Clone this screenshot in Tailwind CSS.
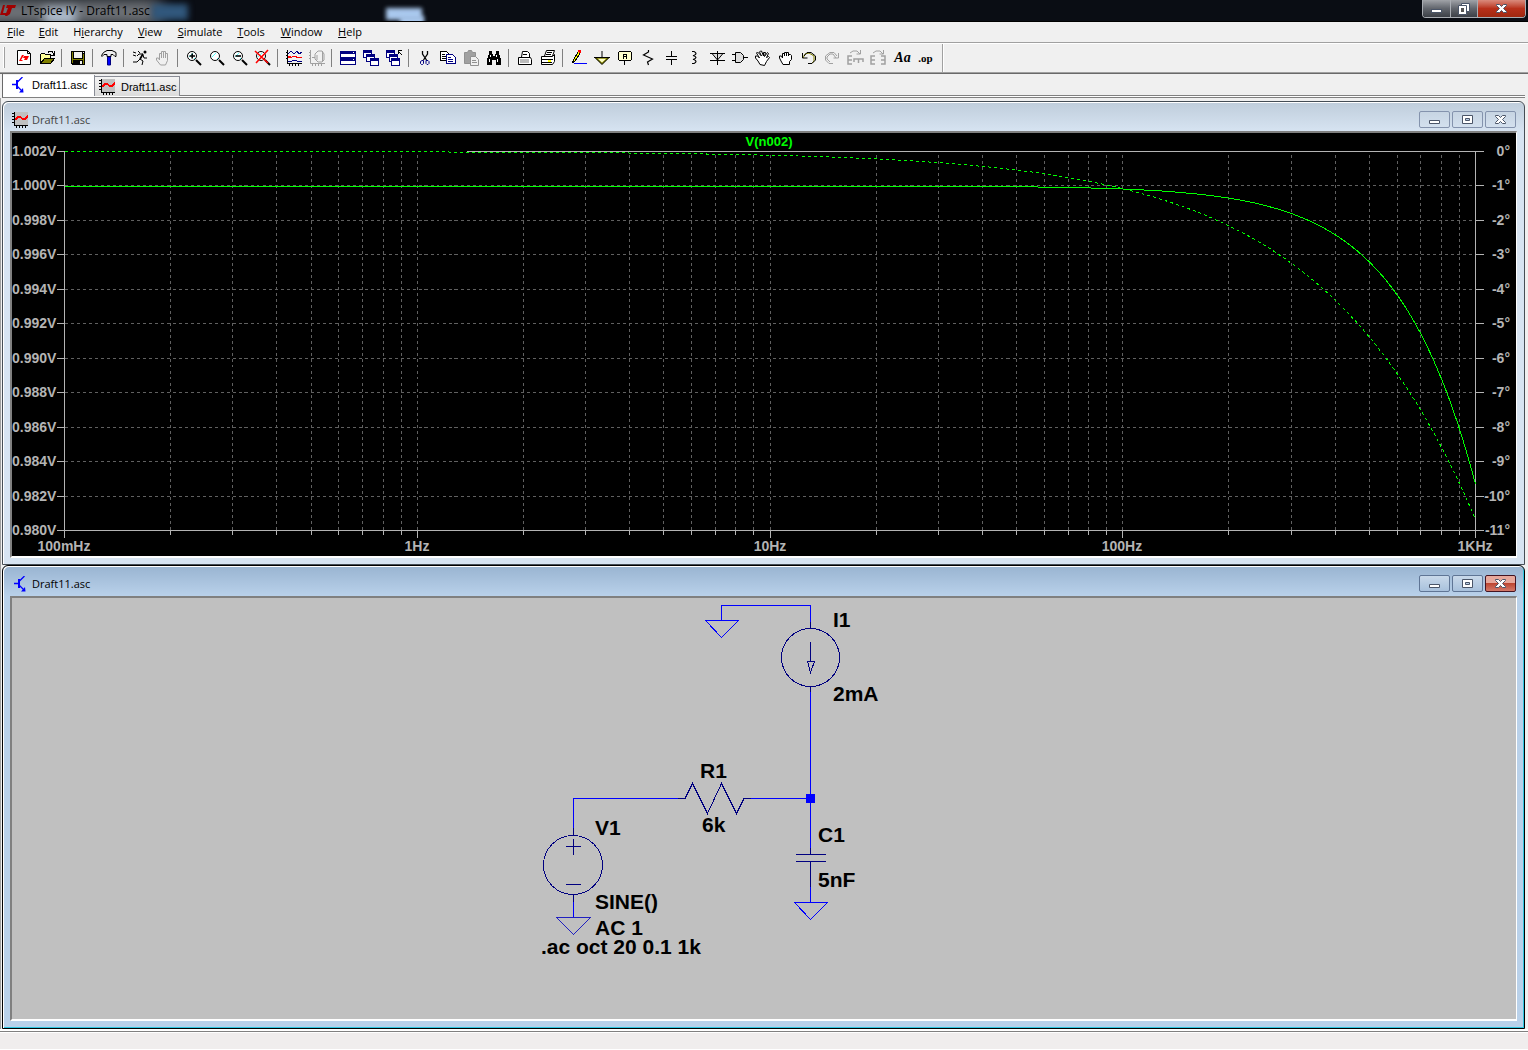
<!DOCTYPE html>
<html lang="en">
<head>
<meta charset="utf-8">
<title>LTspice IV - Draft11.asc</title>
<script src="https://cdn.jsdelivr.net/npm/@tailwindcss/browser@4"></script>
</head>
<body class="h-screen flex flex-col overflow-hidden bg-[#f0f0f0] text-black font-['Noto_Sans',sans-serif] text-xs">

<!-- shared icons -->
<svg class="hidden">
  <symbol id="i-wave" viewBox="0 0 16 16"><path fill="#c0c0c0" d="M2 0h14v14H2z"/><path stroke="#000" stroke-width="1" d="M2.500 0v13.500H16M0 1.500h2M0 4.500h2M0 7.500h2M0 10.500h2M4.500 14v2M7.500 14v2M10.500 14v2M13.500 14v2" fill="none"/><path stroke="#f00" stroke-width="1.800" fill="none" d="M3 8l3-3h2l3 2h2l3-3"/></symbol>
  <symbol id="i-bjt" viewBox="0 0 16 16"><path stroke="#00f" fill="none" stroke-width="1.300" d="M0 7.500h5M10.500 0L5 5.500M5 9l5 5"/><path fill="#00f" d="M4 3h2v9H4zM11.500 15.500H7l4-4.500z"/></symbol>
  <symbol id="i-min" viewBox="0 0 12 10"><path fill="#fff" stroke="#4a5568" d="M.5 5.500h10v3H.5z"/></symbol>
  <symbol id="i-max" viewBox="0 0 12 10"><path fill="#fff" stroke="#4a5568" d="M.5.500h10v8H.5z"/><path fill="#b9cde5" stroke="#4a5568" d="M3.500 3.500h4v2h-4z"/></symbol>
  <symbol id="i-close" viewBox="0 0 12 10"><path fill="#fff" stroke="#4a5568" d="M.5.500h3l2 2 2-2h3v1l-3 3 3 3v1h-3l-2-2-2 2h-3v-1l3-3-3-3z"/></symbol>
  <symbol id="i-lens" viewBox="0 0 16 16"><circle cx="6" cy="6" r="4.500" fill="#fff" stroke="#000"/><path stroke="#5ff" d="M3 7l4-4M8 9l1-1" stroke-width="1"/><path stroke="#000" stroke-width="2" d="M10 10l5 5"/></symbol>
  <symbol id="i-win" viewBox="0 0 9 8"><path fill="#fff" stroke="#000080" d="M.5.500h8v7h-8z"/><path fill="#000080" d="M0 0h9v3H0z"/></symbol>
</svg>

<header class="h-[22px] shrink-0 relative overflow-hidden flex items-center bg-[#0a0d14] border-b border-black">
  <div class="absolute -left-8 top-0 w-48 h-6 bg-[#777b80] blur-[8px]"></div>
  <div class="absolute left-11 top-2 w-8 h-4 bg-[#aebccc] blur-[5px]"></div>
  <div class="absolute left-[152px] top-1 w-9 h-4 bg-[#31577c] blur-[3px]"></div>
  <div class="absolute left-[386px] top-2 w-9 h-3 bg-[#a9c8ed] blur-[2px]"></div>
  <div class="absolute left-[400px] top-4 w-6 h-3 bg-[#a9c8ed] blur-[2px]"></div>
  <svg class="relative w-4 h-3 shrink-0" viewBox="0 0 16 12"><path fill="#a00000" d="M3 0h2L3 8h4l-1 2H0zM7 0h9l-1 3h-3l-2 6-3 2H5l3-8H6z"/></svg>
  <h1 class="relative ml-[5px] text-xs leading-5 whitespace-nowrap font-['Open_Sans',sans-serif]">LTspice IV - Draft11.asc</h1>
  <div class="relative ml-auto mr-[2px] self-start h-[18px] flex rounded-b border border-t-0 border-[#a9adb3] overflow-hidden">
    <button aria-label="Minimize" class="w-7 flex justify-center items-center bg-linear-to-b from-[#a0a3a8] via-[#62666d] to-[#3c4047] border-r border-[#a9adb3]"><svg class="w-3 h-[10px]" shape-rendering="crispEdges"><use href="#i-min"/></svg></button>
    <button aria-label="Restore" class="w-[27px] flex justify-center items-center bg-linear-to-b from-[#a0a3a8] via-[#62666d] to-[#3c4047] border-r border-[#a9adb3]"><svg class="w-3 h-3" viewBox="0 0 12 12"><path fill="#fff" stroke="#4a5568" d="M3.500.500h8v8h-8z"/><path fill="#fff" stroke="#4a5568" d="M.5 2.500h8v9h-8z"/><path fill="#555" d="M3 5h3v4H3z"/></svg></button>
    <button aria-label="Close" class="w-[47px] flex justify-center items-center bg-linear-to-b from-[#d98a7c] via-[#b8301a] to-[#a02810]"><svg class="w-3 h-[10px]"><use href="#i-close"/></svg></button>
  </div>
</header>

<nav class="h-[22px] shrink-0 flex items-center pb-[2px] border-b border-white shadow-[inset_0_-1px_0_#a0a0a0] font-['Open_Sans',sans-serif] text-[11px] leading-4">
  <button class="w-[32px]"><u>F</u>ile</button>
  <button class="w-[33px]"><u>E</u>dit</button>
  <button class="w-[66px]">H<u>i</u>erarchy</button>
  <button class="w-[38px]"><u>V</u>iew</button>
  <button class="w-[62px]"><u>S</u>imulate</button>
  <button class="w-[40px]"><u>T</u>ools</button>
  <button class="w-[61px]"><u>W</u>indow</button>
  <button class="w-[36px]"><u>H</u>elp</button>
</nav>

<div role="toolbar" class="h-[30px] shrink-0 flex items-center pl-[3px] pb-[2px] border-b border-[#696969] shadow-[inset_0_-1px_0_#a0a0a0] [&>button]:w-[23px] [&>button]:h-4 [&>button]:pl-1 [&>button]:shrink-0 [&>button>svg]:w-4 [&>button>svg]:h-4 [&>button>svg]:overflow-visible [&>i]:w-px [&>i]:h-[18px] [&>i]:bg-[#808080] [&>i]:ml-[3px] [&>i]:mr-1">
  <div class="w-[2px] h-[21px] border-l border-white border-r border-r-[#a0a0a0] mr-[7px]"></div>
  <button aria-label="New"><svg viewBox="0 0 16 16"><path fill="#fff" stroke="#000" d="M1.500.500h10l3 3v11h-13z"/><path fill="none" stroke="#000" d="M11.500.500v3h3"/><path fill="#f00" d="M6 5L3 11h3l1-1H5l3-5zM8 6h5l-2 4H8l1-2H7z"/></svg></button>
  <button aria-label="Open"><svg viewBox="0 0 16 16" shape-rendering="crispEdges"><path fill="#ff9" stroke="#000" d="M1.500 13V4.500l1-1h3l1 1h5v3"/><path fill="#808000" stroke="#000" d="M1.500 13.500l4-5h10l-4 5z"/><path fill="none" stroke="#000" d="M9 2.500l1-1h3l2 3M15.500 1v4H12"/></svg></button>
  <i></i>
  <button aria-label="Save"><svg viewBox="0 0 16 16" shape-rendering="crispEdges"><path fill="#000" d="M1 1h14v14H2l-1-1z"/><path fill="#808000" d="M2 2h1v11H2zM13 4h1v10h-1zM3 9h10v1H3z"/><path fill="#f0f0f0" d="M4 2h8v6H4zM10 11h2v3h-2zM13 2h1v1h-1z"/></svg></button>
  <i></i>
  <button aria-label="Control panel"><svg viewBox="0 0 16 16"><path fill="#eee" stroke="#000" d="M.5 5.500l2-3L6 .500h5l4 2v4h-1l-2-2H10v2H6v-2L3 4.500l-2 2z"/><path fill="#00f" stroke="#000080" d="M6.500 7h3v8h-3z"/></svg></button>
  <i></i>
  <button aria-label="Run"><svg viewBox="0 0 16 16"><circle cx="13" cy="2" r="1.500"/><path fill="none" stroke="#000" stroke-width="1.800" d="M11 4L8 9"/><path fill="none" stroke="#000" d="M8 9l3 2-1 4M8 9l-3 3H1M11 4H7L5 6M11 5l1 3h3M1 2l3 1M1 5l3 1M6 1l2 2"/></svg></button>
  <button aria-label="Halt"><svg viewBox="0 0 16 16"><path fill="#f0f0f0" stroke="#a0a0a0" d="M5.500 15l-4-5v-2h2l1 2V3.500h2V8 1.500h2V8 1.500h2V8 3.500h2v7l-2 4.500z"/></svg></button>
  <i></i>
  <button aria-label="Zoom in"><svg><use href="#i-lens"/><path stroke="#000" stroke-width="1.600" d="M3.500 6h5.500M6.200 3.500v5"/></svg></button>
  <button aria-label="Pan"><svg><use href="#i-lens"/></svg></button>
  <button aria-label="Zoom out"><svg><use href="#i-lens"/><path stroke="#000" stroke-width="1.600" d="M3.500 6h5.500"/></svg></button>
  <button aria-label="Zoom fit"><svg><use href="#i-lens"/><path stroke="#f00" stroke-width="1.600" d="M0 1l13 12M13 0L1 13"/></svg></button>
  <i></i>
  <button aria-label="Autorange"><svg viewBox="0 0 16 16" shape-rendering="crispEdges"><path fill="none" stroke="#000" d="M1.500 0v13.500H16M0 2.500h1M0 5.500h1M0 8.500h1M3.500 14v2M6.500 14v2M9.500 14v2M12.500 14v2"/><path fill="none" stroke="#000080" d="M2 4l3-3 3 3 3-3 2 3 3-2M2 11h4l2-1 3 1h5"/><path fill="none" stroke="#f00" d="M2 7.500h3l2-1h2l3 1h4M2 6.500h3"/></svg></button>
  <button aria-label="Axis"><svg viewBox="0 0 16 16" fill="none" stroke="#a0a0a0"><path d="M1.500 0v13.500H16M0 2.500h1M0 5.500h1M0 8.500h1M3.500 14v2M6.500 14v2M9.500 14v2M12.500 14v2M3 7.500h3M6 4l3-3h4l2 3v6l-2 2H9L6 9zM13.500 1v11M8 5v5"/></svg></button>
  <i></i>
  <button aria-label="Tile"><svg viewBox="0 0 16 16" shape-rendering="crispEdges"><path fill="#000080" d="M0 1h16v14H0z"/><path fill="#fff" d="M1 4h14v3H1zM1 11h14v3H1zM13 2h1v1h-1zM13 9h1v1h-1z"/></svg></button>
  <button aria-label="Cascade"><svg viewBox="0 0 16 16" shape-rendering="crispEdges"><use href="#i-win" width="9" height="8"/><use href="#i-win" x="3" y="4" width="9" height="8"/><use href="#i-win" x="7" y="8" width="9" height="8"/></svg></button>
  <button aria-label="Close all"><svg viewBox="0 0 16 16" shape-rendering="crispEdges"><use href="#i-win" width="9" height="8"/><use href="#i-win" x="3" y="4" width="9" height="8"/><use href="#i-win" x="5" y="8" width="9" height="8"/><path stroke="#000" fill="none" d="M16 5l-4-4M12.500 4V.500H16"/></svg></button>
  <i></i>
  <button aria-label="Cut"><svg viewBox="0 0 16 16"><path stroke="#000" stroke-width="1.300" fill="none" d="M5.500 1v3l4 6M10.500 1v3l-4 6"/><path fill="none" stroke="#000080" d="M5 10.500h1.500v3l-1 1h-1l-1-1v-2zM10 10.500h1l1 1v2l-1 1h-1l-1-1v-3z"/></svg></button>
  <button aria-label="Copy"><svg viewBox="0 0 16 16" shape-rendering="crispEdges"><path fill="#fff" stroke="#000" d="M.5 1.500h6l2 2v7h-8z"/><path stroke="#000" d="M2 4.500h3M2 6.500h4M2 8.500h4"/><path fill="#fff" stroke="#000080" d="M6.500 4.500h6l3 3v6h-9z"/><path stroke="#000080" d="M8 7.500h3M8 9.500h5M8 11.500h5"/></svg></button>
  <button aria-label="Paste"><svg viewBox="0 0 16 16"><path fill="#a0a0a0" stroke="#909090" d="M1.500 2.500h3l1-2h3l1 2h3v11h-11z"/><path fill="#f0f0f0" stroke="#909090" d="M7.500 6.500h5l3 3v6h-8z"/><path stroke="#909090" d="M9 10.500h4M9 12.500h5"/></svg></button>
  <button aria-label="Find"><svg viewBox="0 0 16 16" shape-rendering="crispEdges"><path d="M3 1h3v3h1v2h2V4h1V1h3v3l2 5v6h-5v-5H6v5H1V9l2-5z"/><path fill="#fff" d="M4 5h1v2H4zM3 9h1v3H3zM10 5h1v2h-1zM11 9h1v3h-1z"/></svg></button>
  <i></i>
  <button aria-label="Print"><svg viewBox="0 0 16 16"><path fill="#fff" stroke="#000" d="M4.500 7l1-5.500h5l2 2V7M1.500 7.500h12l1 2v5h-13z"/><path fill="#bbb" d="M3 9h9v4H3z"/><path stroke="#000" d="M6 4.500h4"/></svg></button>
  <button aria-label="Print setup"><svg viewBox="0 0 16 16"><path fill="#fff" stroke="#000" d="M4.500 6l2-5.500h8l-2 5.500M1.500 6.500h11l2-2v7l-2 3h-11z"/><path stroke="#000" d="M7 2.500h5M6 4.500h5M2 9.500h11M2 12.500h10"/><path fill="#ff0" d="M8 10h3v2H8z"/></svg></button>
  <i></i>
  <button aria-label="Wire"><svg viewBox="0 0 16 16" shape-rendering="crispEdges"><path fill="#ff0" stroke="#000" d="M2.500 9.500l5-8h2l-1 3-5 7-2 1z"/><path fill="#f00" d="M7 0h3v3H8z"/><path stroke="#00f" d="M3 13.500h13"/></svg></button>
  <button aria-label="Ground"><svg viewBox="0 0 16 16"><path fill="#ffc" stroke="#808000" stroke-width="1.500" d="M2 8h12L8 13.500z"/><path stroke="#000" fill="none" d="M8 1v6M0 7.500h16M1.500 8L8 14.500 14.500 8"/></svg></button>
  <button aria-label="Label"><svg viewBox="0 0 16 16" shape-rendering="crispEdges"><path fill="#ffc" stroke="#000" d="M1.500 2.500l1-1h11l1 1v7l-1 1h-11l-1-1z"/><path stroke="#000" fill="none" d="M7.500 11v4M6.500 9V4.500h3V9M6.500 6.500h3"/></svg></button>
  <button aria-label="Resistor"><svg viewBox="0 0 16 16"><path stroke="#000" stroke-width="1.200" fill="none" d="M8.500 0v2l-5 3 9 4-5 3 1 3"/></svg></button>
  <button aria-label="Capacitor"><svg viewBox="0 0 16 16" shape-rendering="crispEdges"><path stroke="#000" fill="none" d="M8.500 1v5M8.500 9v6M3 6.500h11M3 9.500h11"/></svg></button>
  <button aria-label="Inductor"><svg viewBox="0 0 16 16"><path stroke="#000" stroke-width="1.200" fill="none" d="M6 1.500h2q4 2 0 4H7q6 2 0 4h1q4 2 0 4H6"/></svg></button>
  <button aria-label="Diode"><svg viewBox="0 0 16 16"><path fill="#ddd" stroke="#000" d="M3 3.500h11L8.500 10z"/><path stroke="#000" d="M1 3.500h15M1 10.500h15M8.500 1v14"/></svg></button>
  <button aria-label="Component"><svg viewBox="0 0 16 16"><path fill="#ddd" stroke="#000" d="M3.500 2.500h5l3 3v4l-3 3h-5z"/><path stroke="#000" d="M0 4.500h3M0 10.500h3M12 7.500h4"/></svg></button>
  <button aria-label="Move"><svg viewBox="0 0 16 16"><path fill="#fff" stroke="#000" d="M5 14.500L3 11 .5 8V6h2l2 2-3-5 1-1 4 4-2-4 1-1h1l2 5V2.500h2l-1 4 3-4 1 1-2 4 2-1 1 1-3 4-2 4z"/></svg></button>
  <button aria-label="Drag"><svg viewBox="0 0 16 16"><path fill="#fff" stroke="#000" d="M5 14.500L3 11 1.500 8V6h2l1 2V3.500h2V6 2.500h2V6 2.500h2V6 4.500h2l1 1v4l-2 2v3z"/></svg></button>
  <button aria-label="Undo"><svg viewBox="0 0 16 16"><path stroke="#808000" fill="none" d="M2 8l2-4 4-1 5 3v5l-3 3"/><path stroke="#000" fill="none" d="M1.500 3v5h5M3 6l3-3.500h4L14.500 6v4L11 13.500H7"/></svg></button>
  <button aria-label="Redo"><svg viewBox="0 0 16 16"><path stroke="#a0a0a0" fill="none" d="M14.500 3v5h-5M13 6l-3-3.500H6L1.500 6v4L5 13.500h4M12 8l-3-4H6L3 7v2l3 3"/></svg></button>
  <button aria-label="Rotate"><svg viewBox="0 0 16 16"><path stroke="#a0a0a0" stroke-width="1.500" fill="none" d="M5 6H1v8h4M1 10h4M7 12V9h9v3M11.500 9v4"/><path stroke="#a0a0a0" fill="none" d="M3 3l3-2h4l3 3M13.500 0v4h-4"/></svg></button>
  <button aria-label="Mirror"><svg viewBox="0 0 16 16"><path stroke="#a0a0a0" stroke-width="1.500" fill="none" d="M5 6H1v8h4M1 10h4M11 6h4v8h-4M15 10h-4"/><path stroke="#a0a0a0" fill="none" d="M3 3l3-2h4l3 3M13.500 0v4h-4"/></svg></button>
  <button aria-label="Text" class="font-['Liberation_Serif',serif] font-bold italic text-sm leading-4">Aa</button>
  <button aria-label="SPICE directive" class="font-['Liberation_Serif',serif] font-bold text-[11px] leading-[14px]">.op</button>
  <div class="ml-[7px] self-start w-[2px] h-7 bg-[#a0a0a0] border-r border-white"></div>
</div>

<div role="tablist" class="h-[24px] shrink-0 flex items-start ml-[2px] mr-[3px] pt-px border-l border-[#696969] border-b border-b-[#808080] shadow-[inset_0_-1px_0_#fff,inset_0_-2px_0_#808080] font-['Liberation_Sans',sans-serif] text-[11px] leading-4">
  <button role="tab" aria-selected="true" class="w-[92px] h-[21px] flex items-center bg-white border-r border-[#898c95] pl-[7px] pb-[2px]"><svg class="w-4 h-4 ml-[2px] mr-1 shrink-0"><use href="#i-bjt"/></svg>Draft11.asc</button>
  <button role="tab" class="w-[85px] h-5 mt-px flex items-center bg-linear-to-b from-[#f4f4f4] to-[#dcdcdc] border border-l-0 border-b-0 border-[#898c95] pl-1"><svg class="w-4 h-4 mr-[6px] shrink-0" shape-rendering="crispEdges"><use href="#i-wave"/></svg>Draft11.asc</button>
</div>

<main class="flex-1 min-h-0 flex flex-col pt-[3px] pl-px pr-[3px] border-l border-l-[#a0a0a0]">
  <section aria-label="Plot" class="flex-1 min-h-0 flex flex-col rounded-t-md border border-[#454d55] shadow-[inset_1px_1px_0_#fff] bg-[#d7e4f2] bg-linear-to-b from-[#bfcddb] to-[#d7e4f2] to-[30px] px-[7px] pb-[6px]">
    <div class="h-[29px] shrink-0 flex items-center pt-[6px] pr-px text-[#444]">
      <svg class="w-4 h-4 mx-[2px] shrink-0" shape-rendering="crispEdges"><use href="#i-wave"/></svg>
      <h2 class="ml-[2px] grow font-['Open_Sans',sans-serif] text-[11px] leading-4">Draft11.asc</h2>
      <div class="flex gap-[2px] [&>button]:w-[31px] [&>button]:h-[17px] [&>button]:flex [&>button]:items-center [&>button]:justify-center [&>button]:border [&>button]:border-[#8493ad] [&>button]:rounded-xs [&_svg]:w-3 [&_svg]:h-[10px]">
        <button aria-label="Minimize"><svg><use href="#i-min"/></svg></button>
        <button aria-label="Maximize"><svg><use href="#i-max"/></svg></button>
        <button aria-label="Close"><svg><use href="#i-close"/></svg></button>
      </div>
    </div>
    <div class="flex-1 min-h-0 border-t-2 border-l-2 border-t-[#808080] border-l-[#808080] border-r border-b-2 border-r-white border-b-white bg-black">
      <svg id="plot" class="block w-full h-full font-['Liberation_Sans',sans-serif] font-bold text-sm" fill="#b4b4b4"></svg>
    </div>
  </section>

  <section aria-label="Schematic" class="flex-1 min-h-0 flex flex-col rounded-t-md border border-black shadow-[inset_1px_1px_0_#fff,inset_-1px_-1px_0_#2fc6e0] bg-[#b9d1ea] bg-linear-to-b from-[#99b4d1] to-[#b9d1ea] to-[30px] px-[7px] pb-[7px]">
    <div class="h-[30px] shrink-0 flex items-center pt-[6px] pr-px">
      <svg class="w-4 h-4 ml-1 shrink-0"><use href="#i-bjt"/></svg>
      <h2 class="ml-[2px] grow font-['Open_Sans',sans-serif] text-[11px] leading-4">Draft11.asc</h2>
      <div class="flex gap-[2px] [&>button]:w-[31px] [&>button]:h-[17px] [&>button]:flex [&>button]:items-center [&>button]:justify-center [&>button]:border [&>button]:rounded-xs [&_svg]:w-3 [&_svg]:h-[10px]">
        <button aria-label="Minimize" class="border-[#5f7595] bg-linear-to-b from-[#c9d9ea] to-[#a8c1dc]"><svg><use href="#i-min"/></svg></button>
        <button aria-label="Maximize" class="border-[#5f7595] bg-linear-to-b from-[#c9d9ea] to-[#a8c1dc]"><svg><use href="#i-max"/></svg></button>
        <button aria-label="Close" class="border-[#431422] bg-linear-to-b from-[#e7a89c] from-45% via-[#bd4632] via-50% to-[#d4796a]"><svg><use href="#i-close"/></svg></button>
      </div>
    </div>
    <div class="flex-1 min-h-0 border-t-2 border-l-2 border-t-[#808080] border-l-[#808080] border-r border-b-2 border-r-white border-b-white bg-[#c0c0c0]">
      <svg class="block w-full h-full font-['Liberation_Sans',sans-serif] font-bold text-[21px]">
        <g transform="translate(-12 -598)">
          <g fill="none" stroke="#00f" shape-rendering="crispEdges">
            <path d="M721.500 620V605.500H810.500V622M810.500 692V848M573.500 828V798.500H678M751 798.500H810M810.500 887V902M705.500 620.500H738.500L721.500 637.500ZM794.500 902.500H827.500L810.500 919.500ZM573.500 902V917"/>
            <g stroke="#000080">
              <path d="M810.500 622V628M810.500 686V692M810.500 642V661M807.500 661.500H814.500L810.500 672.500ZM678 798.500H685L692.500 783.500 707.500 813.500 721.500 783.500 736.500 813.500 744 798.500H751M810.500 848V854M796 854.500H826M796 861.500H826M810.500 862V887M573.500 828V835M573.500 839V855M566 846.500H581M566 884.500H581M573.500 894V902"/>
              <circle cx="810.500" cy="657.500" r="29"/><circle cx="573" cy="865" r="29.500"/>
            </g>
            <path d="M556.500 917.500H590.500L573.500 934.500Z" stroke="#2020c0"/>
          </g>
          <path fill="#00f" d="M806 794h9v9h-9z"/>
          <text x="833" y="627">I1</text><text x="833" y="701">2mA</text>
          <text x="700" y="778">R1</text><text x="702" y="832">6k</text>
          <text x="595" y="835">V1</text><text x="818" y="842">C1</text>
          <text x="818" y="887">5nF</text><text x="595" y="909">SINE()</text>
          <text x="595" y="935">AC 1</text><text x="541" y="954">.ac oct 20 0.1 1k</text>
        </g>
      </svg>
    </div>
  </section>
</main>

<footer class="h-[21px] shrink-0 bg-[#f0eded] border-t-2 border-white shadow-[inset_0_1px_0_#808080,inset_0_2px_0_#fff] border-b border-b-white"></footer>

<script>
// AC response of the RC low-pass: R = 6k, C = 5nF, 0.1 Hz to 1 kHz
const svg = document.getElementById('plot');
function draw() {
  const box = svg.getBoundingClientRect();
  const W = Math.round(box.width), H = Math.round(box.height);
  const x0 = 52.5, x1 = W - 40.5, y0 = 18.5, y1 = H - 25.5;
  const fc = 1 / (2 * Math.PI * 6000 * 5e-9);
  const X = lg => x0 + (lg + 1) / 4 * (x1 - x0);
  let grid = '', axis = '', text = '';
  for (let i = 0; i <= 11; i++) {
    const y = Math.floor(y0 + (y1 - y0) * i / 11) + 0.5;
    if (i && i < 11) grid += `M${x0} ${y}H${x1}`;
    axis += `M45 ${y}H${x0}M${x1} ${y}h8`;
    text += `<text x="0" y="${y + 4.5}">${(1.002 - i * 0.002).toFixed(3)}V</text>`;
    text += `<text x="${W - 6}" y="${y + 4.5}" text-anchor="end">${i ? '-' + i : 0}°</text>`;
  }
  const names = ['100mHz', '1Hz', '10Hz', '100Hz', '1KHz'];
  for (let d = 0; d <= 4; d++) {
    for (let m = 1; m < 10 && !(d === 4 && m > 1); m++) {
      const x = Math.floor(X(d - 1 + Math.log10(m))) + 0.5;
      if (x > x0 && x < x1 - 1) grid += `M${x} ${y0 + 3}V${y1}`;
      axis += `M${x} ${y1}v${m === 1 ? 7 : 4}`;
    }
    text += `<text x="${Math.floor(X(d - 1))}" y="${H - 5}" text-anchor="middle">${names[d]}</text>`;
  }
  axis += `M${x0} ${y0}H${x1}M${x0} ${y0}V${y1}H${x1}V${y0}`;
  let mag = '', ph = '';
  for (let k = 0; k <= 400; k++) {
    const lg = -1 + k / 100, r = Math.pow(10, lg) / fc;
    const a = 1 / Math.sqrt(1 + r * r), p = Math.atan(r) * 180 / Math.PI;
    const c = k ? 'L' : 'M';
    mag += `${c}${X(lg).toFixed(1)} ${(y0 + (1.002 - a) / 0.022 * (y1 - y0)).toFixed(1)}`;
    ph += `${c}${X(lg).toFixed(1)} ${(y0 + p / 11 * (y1 - y0)).toFixed(1)}`;
  }
  svg.innerHTML = `<g fill="none" shape-rendering="crispEdges">
    <path d="${grid}" stroke="#606060" stroke-dasharray="3 3"/>
    <path d="${axis}" stroke="#b4b4b4"/>
    <path d="M${x0 + 1} ${y0}H455" stroke="#000"/>
    <path d="${mag}" stroke="#0f0"/><path d="${ph}" stroke="#0f0" stroke-dasharray="3 3"/></g>
    ${text}<text x="${Math.round(W / 2) + 5}" y="13" text-anchor="middle" fill="#0f0" font-size="13">V(n002)</text>`;
}
new ResizeObserver(draw).observe(svg.parentElement);
</script>
</body>
</html>
